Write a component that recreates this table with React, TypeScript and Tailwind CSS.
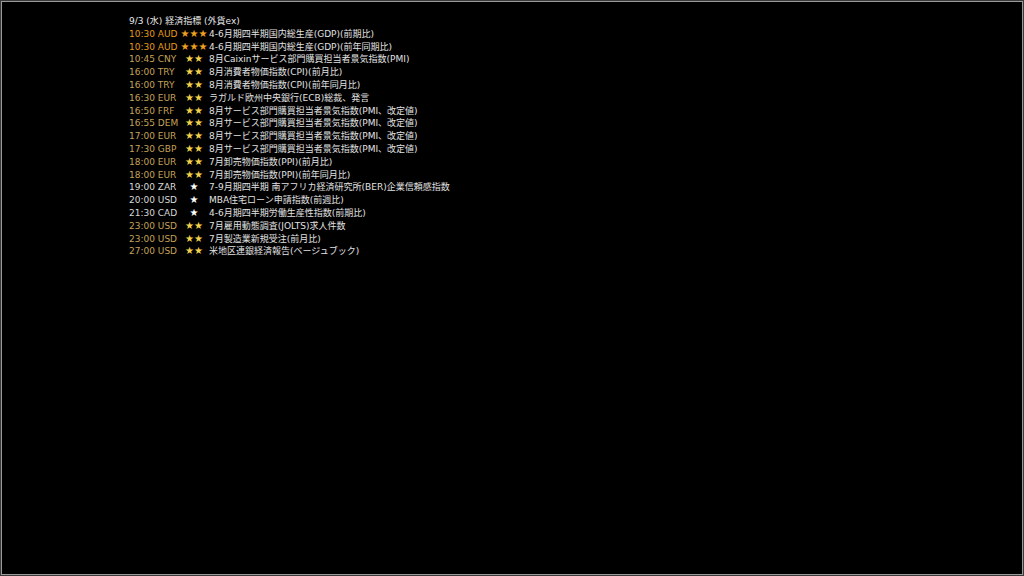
import React from "react";

type Row = { time: string; stars: number; text: string };

const rows: Row[] = [
  { time: "10:30 AUD", stars: 3, text: "4-6月期四半期国内総生産(GDP)(前期比)" },
  { time: "10:30 AUD", stars: 3, text: "4-6月期四半期国内総生産(GDP)(前年同期比)" },
  { time: "10:45 CNY", stars: 2, text: "8月Caixinサービス部門購買担当者景気指数(PMI)" },
  { time: "16:00 TRY", stars: 2, text: "8月消費者物価指数(CPI)(前月比)" },
  { time: "16:00 TRY", stars: 2, text: "8月消費者物価指数(CPI)(前年同月比)" },
  { time: "16:30 EUR", stars: 2, text: "ラガルド欧州中央銀行(ECB)総裁、発言" },
  { time: "16:50 FRF", stars: 2, text: "8月サービス部門購買担当者景気指数(PMI、改定値)" },
  { time: "16:55 DEM", stars: 2, text: "8月サービス部門購買担当者景気指数(PMI、改定値)" },
  { time: "17:00 EUR", stars: 2, text: "8月サービス部門購買担当者景気指数(PMI、改定値)" },
  { time: "17:30 GBP", stars: 2, text: "8月サービス部門購買担当者景気指数(PMI、改定値)" },
  { time: "18:00 EUR", stars: 2, text: "7月卸売物価指数(PPI)(前月比)" },
  { time: "18:00 EUR", stars: 2, text: "7月卸売物価指数(PPI)(前年同月比)" },
  { time: "19:00 ZAR", stars: 1, text: "7-9月期四半期 南アフリカ経済研究所(BER)企業信頼感指数" },
  { time: "20:00 USD", stars: 1, text: "MBA住宅ローン申請指数(前週比)" },
  { time: "21:30 CAD", stars: 1, text: "4-6月期四半期労働生産性指数(前期比)" },
  { time: "23:00 USD", stars: 2, text: "7月雇用動態調査(JOLTS)求人件数" },
  { time: "23:00 USD", stars: 2, text: "7月製造業新規受注(前月比)" },
  { time: "27:00 USD", stars: 2, text: "米地区連銀経済報告(ベージュブック)" },
];

// colour by importance
const timeColor: Record<number, string> = {
  3: "text-[#e39a16]",
  2: "text-[#c4a25a]",
  1: "text-[#d8d8d8]",
};
const starColor: Record<number, string> = {
  3: "text-[#f0a020]",
  2: "text-[#f2d24a]",
  1: "text-[#ffffff]",
};

export default function App() {
  return (
    <div className="w-[1024px] h-[576px] bg-[#3a3a3a] p-px">
      <div className="w-full h-full bg-black border border-[#9a9a9a] pt-[13px] pl-[127px] text-[9px] leading-[12.8px] text-[#dcdcdc] font-['DejaVu_Sans','Noto_Sans_CJK_JP',sans-serif]">
        {/* header */}
        <div className="text-[#e8e8e8]">9/3 (水) 経済指標 (外貨ex)</div>

        {/* list */}
        {rows.map((r, i) => (
          <div key={i} className="flex items-center whitespace-nowrap">
            <span className={`w-[50px] ${timeColor[r.stars]}`}>{r.time}</span>
            <span className={`w-[30px] text-center text-[10px] ${starColor[r.stars]}`}>
              {"★".repeat(r.stars)}
            </span>
            <span className="text-[#e2e2e2]">{r.text}</span>
          </div>
        ))}
      </div>
    </div>
  );
}
